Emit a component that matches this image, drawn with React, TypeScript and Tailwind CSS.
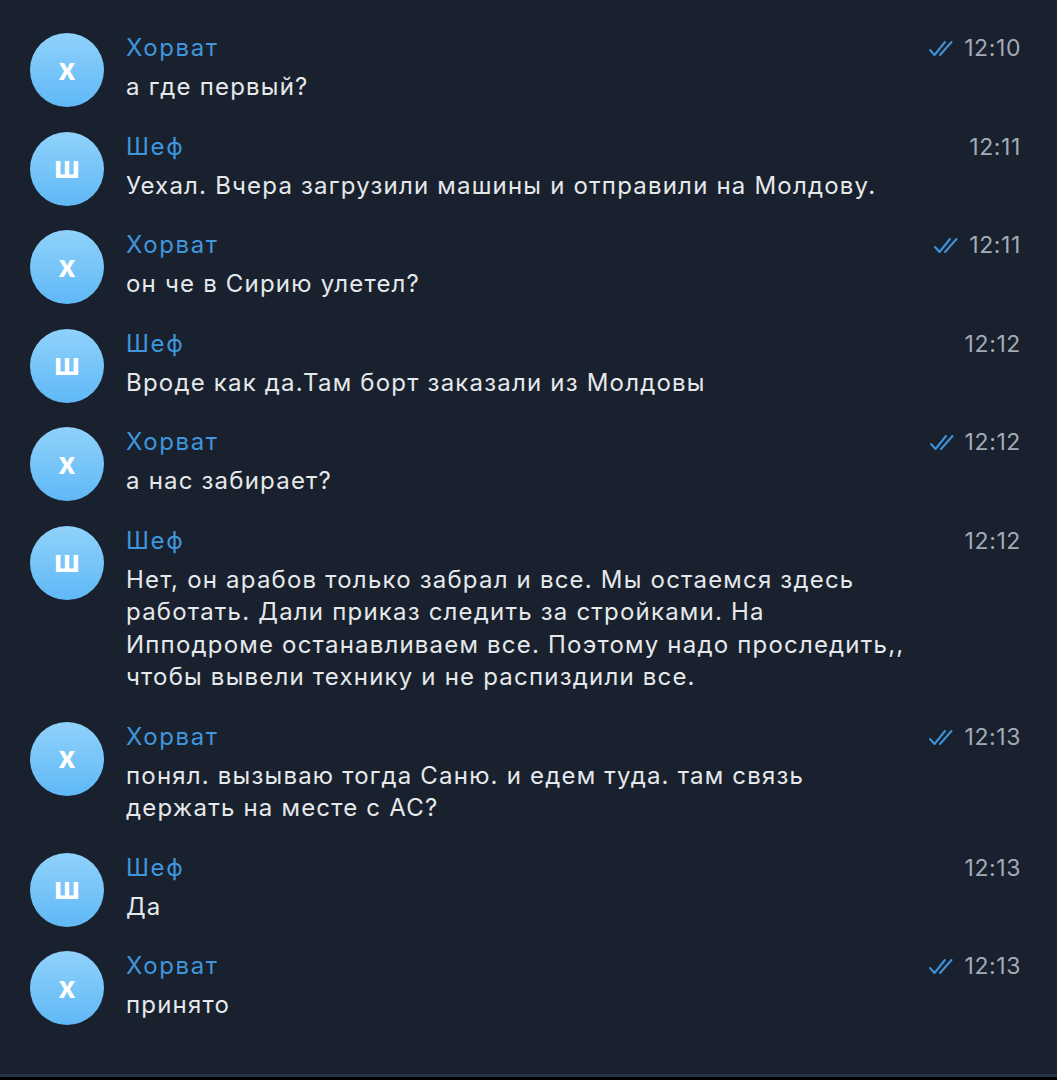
import React from "react";

type Msg = {
  who: "h" | "s";
  text: string[];
  time: string;
};

const messages: Msg[] = [
  { who: "h", text: ["а где первый?"], time: "12:10" },
  { who: "s", text: ["Уехал. Вчера загрузили машины и отправили на Молдову."], time: "12:11" },
  { who: "h", text: ["он че в Сирию улетел?"], time: "12:11" },
  { who: "s", text: ["Вроде как да.Там борт заказали из Молдовы"], time: "12:12" },
  { who: "h", text: ["а нас забирает?"], time: "12:12" },
  {
    who: "s",
    text: [
      "Нет, он арабов только забрал и все. Мы остаемся здесь",
      "работать. Дали приказ следить за стройками. На",
      "Ипподроме останавливаем все. Поэтому надо проследить,,",
      "чтобы вывели технику и не распиздили все.",
    ],
    time: "12:12",
  },
  {
    who: "h",
    text: ["понял. вызываю тогда Саню. и едем туда. там связь", "держать на месте с АС?"],
    time: "12:13",
  },
  { who: "s", text: ["Да"], time: "12:13" },
  { who: "h", text: ["принято"], time: "12:13" },
];

function Checks() {
  return (
    <svg width="28" height="18" viewBox="0 0 28 18" fill="none" className="mr-[8px]">
      <path d="M2 11 L6.5 16 L17 3" stroke="#3f93dc" strokeWidth="2" strokeLinecap="round" strokeLinejoin="round" />
      <path d="M12 16 L23.5 3" stroke="#3f93dc" strokeWidth="2" strokeLinecap="round" />
    </svg>
  );
}

function Avatar({ letter }: { letter: string }) {
  return (
    <div className="flex h-[74px] w-[74px] shrink-0 items-center justify-center rounded-full bg-gradient-to-b from-[#8fd2fb] to-[#5fb8f6]">
      <span className="-mt-[3px] text-[30px] font-bold leading-none text-white">{letter}</span>
    </div>
  );
}

export default function App() {
  return (
    <div
      className="flex h-[1080px] w-[1057px] flex-col overflow-hidden bg-[#18212d]"
      style={{ fontFamily: 'Inter, "Liberation Sans", Arial, sans-serif' }}
    >
      <div className="flex flex-1 flex-col pt-[33px]">
        {messages.map((m, i) => (
          <div key={i} className="flex items-start pl-[30px] pr-[36px]">
            <Avatar letter={m.who === "h" ? "х" : "ш"} />
            <div className="ml-[22px] flex-1 pb-[28px]">
              <div className="flex items-center justify-between">
                <span className="text-[24px] leading-[30px] tracking-[1.6px] text-[#3f96dc]">
                  {m.who === "h" ? "Хорват" : "Шеф"}
                </span>
                <span className="flex items-center text-[23px] leading-[30px] tracking-[0.6px] text-[#a3abb6]">
                  {m.who === "h" ? <Checks /> : null}
                  {m.time}
                </span>
              </div>
              <div className="mt-[8px] text-[24px] leading-[32.5px] tracking-[1.2px] text-[#e6e8eb]">
                {m.text.map((t, j) => (
                  <div key={j}>{t}</div>
                ))}
              </div>
            </div>
          </div>
        ))}
      </div>
      <div className="h-[3px] bg-[#263242]" />
      <div className="h-[3px] bg-black" />
    </div>
  );
}
